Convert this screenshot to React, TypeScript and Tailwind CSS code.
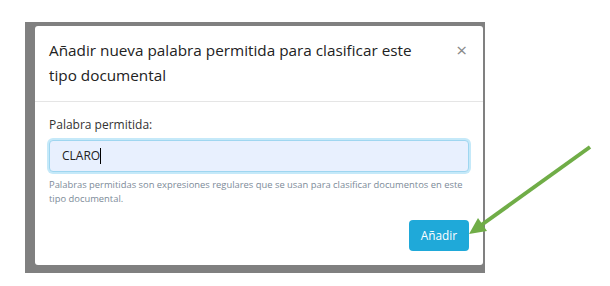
export default function App() {
    return (
        <div className="relative w-[610px] h-[286px] bg-white overflow-hidden font-['Open_Sans',sans-serif]">
            <div className="ml-[25px] mt-[22px] w-[460px] bg-[#808080] pl-[10px] pt-[4px] pr-[2px] pb-[8px]">
                <div className="bg-white rounded-[3px] h-[239px] flex flex-col">
                    <div className="flex items-start justify-between px-[14px] pt-[12px] pb-[13px] border-b border-[#e5e5e5]">
                        <h4 className="w-[380px] text-[15.3px] leading-[25px] text-[#222]">
                            Añadir nueva palabra permitida para clasificar este tipo documental
                        </h4>
                        <button className="text-[19px] leading-[25px] text-[#8a8a8a] pr-[2px]">×</button>
                    </div>
                    <div className="flex flex-col px-[14px] pt-[13px] pb-[14px] flex-1">
                        <label className="text-[12px] leading-[20px] text-[#333] mb-[5px]">Palabra permitida:</label>
                        <div className="h-[32px] rounded-[4px] border border-[#9fd6f0] ring-2 ring-[#c5e9f9] bg-[#e8f0fe] flex items-center pl-[12px] text-[12px] text-[#222]">
                            CLARO<span className="inline-block w-px h-[16px] bg-black" />
                        </div>
                        <p className="mt-[6px] text-[9.4px] leading-[14px] text-[#7d8b99]">
                            Palabras permitidas son expresiones regulares que se usan para clasificar documentos en este tipo documental.
                        </p>
                        <div className="flex justify-end mt-auto">
                            <button className="h-[31px] w-[60px] rounded-[4px] bg-[#1fa9d9] text-white text-[11.8px]">Añadir</button>
                        </div>
                    </div>
                </div>
            </div>
            <svg className="absolute left-0 top-0" width="610" height="286" viewBox="0 0 610 286">
                <line x1="590" y1="147" x2="480" y2="226" stroke="#70ad47" strokeWidth="4" />
                <polygon points="469,234 478,218 487,231" fill="#70ad47" />
            </svg>
        </div>
    );
}
